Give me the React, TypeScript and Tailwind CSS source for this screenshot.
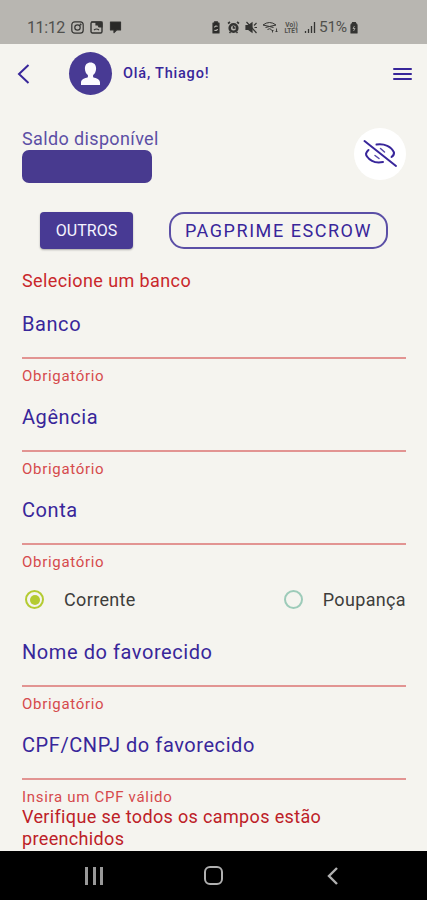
import type { ReactNode } from "react";

interface FieldProps {
  label: string;
  error: string;
  tall?: boolean;
}

// Text field with an error underline and a helper message
function Field({ label, error, tall = true }: FieldProps) {
  return (
    <div className={tall ? "h-[93px] pt-1" : "h-[77px] pt-1"}>
      <div className="h-[45px] text-[20px] leading-6 tracking-[0.57px] text-[#38269a]">{label}</div>
      <div className="h-[2px] bg-[#e29492]" />
      <p className="pt-[9px] text-[15px] leading-4 tracking-[0.7px] text-[#d64a4c]">{error}</p>
    </div>
  );
}

function StatusIcon({ children, width = 13 }: { children: ReactNode; width?: number }) {
  return (
    <svg width={width} height="13" viewBox={`0 0 ${width} 13`} fill="none" stroke="#343432" strokeWidth="1.2">
      {children}
    </svg>
  );
}

function StatusBar() {
  return (
    <div className="flex h-11 items-start bg-[#b8b6b1] pl-[27px] pr-[69px] pt-[18px] text-[16px] leading-[19px] text-[#50504d]">
      <span className="w-[38px] whitespace-nowrap tracking-[-0.4px]">11:12</span>
      <div className="ml-[6px] flex gap-[6px] pt-[3px]">
        <StatusIcon>
          <rect x="0.8" y="0.8" width="11.4" height="11.4" rx="3" />
          <circle cx="6.5" cy="6.5" r="2.7" />
          <circle cx="9.6" cy="3.4" r="0.4" />
        </StatusIcon>
        <StatusIcon>
          <rect x="1" y="1" width="11" height="11" rx="1.5" strokeWidth="1.4" />
          <path d="M1 1h5v3h2l1 2h3V1z" fill="#343432" />
          <path d="M4 9q2.500-2 5 0" />
        </StatusIcon>
        <StatusIcon>
          <path d="M1.500 1h10v8H7.500L5 11.500V9H1.500z" fill="#292927" strokeLinejoin="round" />
        </StatusIcon>
      </div>
      <div className="ml-auto flex gap-[4px] pt-[3px]">
        <StatusIcon width={10}>
          <path d="M2 2h1.500V.800h3V2H8v10H2z" fill="#292927" strokeLinejoin="round" />
          <path d="M3.500 6.500a1.800 1.800 0 0 1 3-1M6.500 8a1.800 1.800 0 0 1-3 1" stroke="#b8b6b1" />
        </StatusIcon>
        <div className="pl-[2px]">
          <StatusIcon>
            <circle cx="6.500" cy="7" r="3.800" strokeWidth="2.600" />
            <path d="M6.500 5v2h2M1 2.500 3 1M12 2.500 10 1M2.500 12l1-1M10.500 12l-1-1" strokeWidth="1.600" />
          </StatusIcon>
        </div>
        <div className="pl-px">
          <StatusIcon>
            <path d="M1 4.500h2.500L7 2v9L3.500 8.500H1z" fill="#343432" />
            <path d="m1.500 1 10 11M9 4.500 11.500 2M9.500 6.500H12" />
          </StatusIcon>
        </div>
        <div>
          <StatusIcon width={17}>
            <path d="M1 4q6.500-5 13 0-6.500 3-13 0M3.500 6.500q4-2 8 0M5.500 8.500q2-1.500 4 0" strokeWidth="1" />
            <path d="M10.500 11.500V9M9.500 10l1-1 1 1M14.500 7.500v3.500M13.500 10l1 1 1-1" strokeWidth="0.900" />
          </StatusIcon>
        </div>
        <div className="w-[17px] pt-px text-center text-[6.500px] font-bold leading-[6px]">
          Vo)) LTE1
        </div>
        <StatusIcon width={12}>
          <path d="M1.500 12v-2M4.500 12V8M7.500 12V5M10.500 12V1" strokeWidth="1.300" />
        </StatusIcon>
      </div>
      <span className="ml-[3px] w-[30px] whitespace-nowrap text-[15.500px] tracking-[-0.3px]">51%</span>
      <div className="-mr-px pt-[3px]">
        <StatusIcon width={10}>
          <path d="M2 4q0-1 1.500-1.500V1.500h3v1Q8 3 8 4v8H2z" fill="#343432" strokeLinejoin="round" />
          <path d="M5.500 5 4 7.500h2L4.500 10" stroke="#b8b6b1" strokeWidth="0.800" />
        </StatusIcon>
      </div>
    </div>
  );
}

function Header() {
  return (
    <header className="flex h-[59px] items-center pl-[17px] pr-[15px] text-[#38269a]">
      <svg width="13" height="20" viewBox="0 0 13 20" fill="none" stroke="currentColor" strokeWidth="2">
        <path d="M11.500 1 2 10l9.500 9" />
      </svg>
      <div className="ml-[39px] flex size-[43px] items-center justify-center rounded-full bg-[#483a94]">
        <svg width="21" height="24" viewBox="0 0 21 24" fill="#fbfaff">
          <path d="M10.500.500c-3.500 0-5.600 2.300-5.600 6 0 2.800 1.300 5.400 3 6.600v2.200C4.500 16.300 1 17.500 1 20.500V23h19v-2.500c0-3-3.500-4.200-6.900-5.200v-2.200c1.700-1.200 3-3.800 3-6.600 0-3.700-2.100-6-5.600-6z" />
        </svg>
      </div>
      <span className="ml-[11px] text-[14.500px] font-medium tracking-[0.8px]">Olá, Thiago!</span>
      <div className="ml-auto flex w-[19px] flex-col gap-[3px]">
        <div className="h-[2px] rounded-full bg-[#38269a]" />
        <div className="h-[2px] rounded-full bg-[#38269a]" />
        <div className="h-[2px] rounded-full bg-[#38269a]" />
      </div>
    </header>
  );
}

function Balance() {
  return (
    <div className="flex h-[109px] justify-between pl-[22px] pr-[21px] pt-[25px]">
      <div>
        <p className="text-[18px] leading-[22px] tracking-[0.37px] text-[#5c4fa5]">Saldo disponível</p>
        <div className="h-[33px] w-[130px] rounded-[7px] bg-[#483a8f]" />
      </div>
      <div className="flex size-[52px] items-center justify-center rounded-full bg-white">
        <svg width="36" height="30" viewBox="0 0 36 30" fill="none" stroke="#38269a" strokeWidth="2" strokeLinecap="round">
          <path d="M2.500 2 34 27" />
          <path d="M14.500 5.500c8-1.200 15 2 17.500 8q.3 2.500-2.500 4.500" />
          <path d="M6.500 11q-4 3.500-1.500 6.500c3.500 5 9.500 6.700 16 5.500" />
          <path d="m18.500 9.500 4 3.500M13 16.500l4 3" strokeWidth="1.500" stroke="#5548a8" />
        </svg>
      </div>
    </div>
  );
}

function BackIcon() {
  return (
    <svg width="11" height="18" viewBox="0 0 11 18" fill="none" stroke="#b0b0b0" strokeWidth="2.400">
      <path d="M10 1 2 9l8 8" />
    </svg>
  );
}

export default function App() {
  return (
    <div className="flex h-[900px] w-[427px] flex-col overflow-hidden bg-[#f5f4ef] font-['Roboto',sans-serif]">
      <StatusBar />
      <Header />
      <Balance />

      <div className="flex h-[37px] items-center pl-10">
        <button className="h-[37px] w-[93px] rounded-[4px] bg-[#483a94] text-[16px] tracking-[0px] text-[#f5f4ff] shadow-[0_1px_2px_rgba(0,0,0,0.3)]">
          OUTROS
        </button>
        <button className="ml-[36px] h-[37px] w-[219px] whitespace-nowrap rounded-[15px] border-2 border-[#5b4fa6] text-[18px] tracking-[1.55px] text-[#38269a]">
          PAGPRIME ESCROW
        </button>
      </div>

      <main className="flex-1 pl-[22px] pr-[21px]">
        <p className="h-[59px] pt-[21px] text-[18px] leading-[22px] tracking-[0.4px] text-[#c9272b]">Selecione um banco</p>
        <Field label="Banco" error="Obrigatório" />
        <Field label="Agência" error="Obrigatório" />
        <Field label="Conta" error="Obrigatório" />

        <div className="h-[49px] pl-[3px]">
          <div className="flex h-[25px] items-center text-[18px] tracking-[0.35px] text-[#3d3d3b]">
            <div className="flex size-[19px] items-center justify-center rounded-full border-2 border-[#b4cb32]">
              <div className="size-[10px] rounded-full bg-[#b4cb32]" />
            </div>
            <span className="ml-5">Corrente</span>
            <div className="ml-auto size-[19px] rounded-full border-2 border-[#9dcbb9]" />
            <span className="ml-5">Poupança</span>
          </div>
        </div>

        <Field label="Nome do favorecido" error="Obrigatório" />
        <Field label="CPF/CNPJ do favorecido" error="Insira um CPF válido" tall={false} />
        <p className="text-[18px] leading-[21.500px] tracking-[0.35px] text-[#bd2027]">
          Verifique se todos os campos estão preenchidos
        </p>
      </main>

      <nav className="flex h-[49px] shrink-0 items-center bg-black pl-[85px]">
        <div className="flex h-[18px] w-[18px] justify-between">
          <div className="w-[3px] bg-[#999]" />
          <div className="w-[3px] bg-[#999]" />
          <div className="w-[3px] bg-[#999]" />
        </div>
        <div className="ml-[101px] size-[19px] rounded-[6px] border-2 border-[#b0b0b0]" />
        <div className="ml-[104px]">
          <BackIcon />
        </div>
      </nav>
    </div>
  );
}
